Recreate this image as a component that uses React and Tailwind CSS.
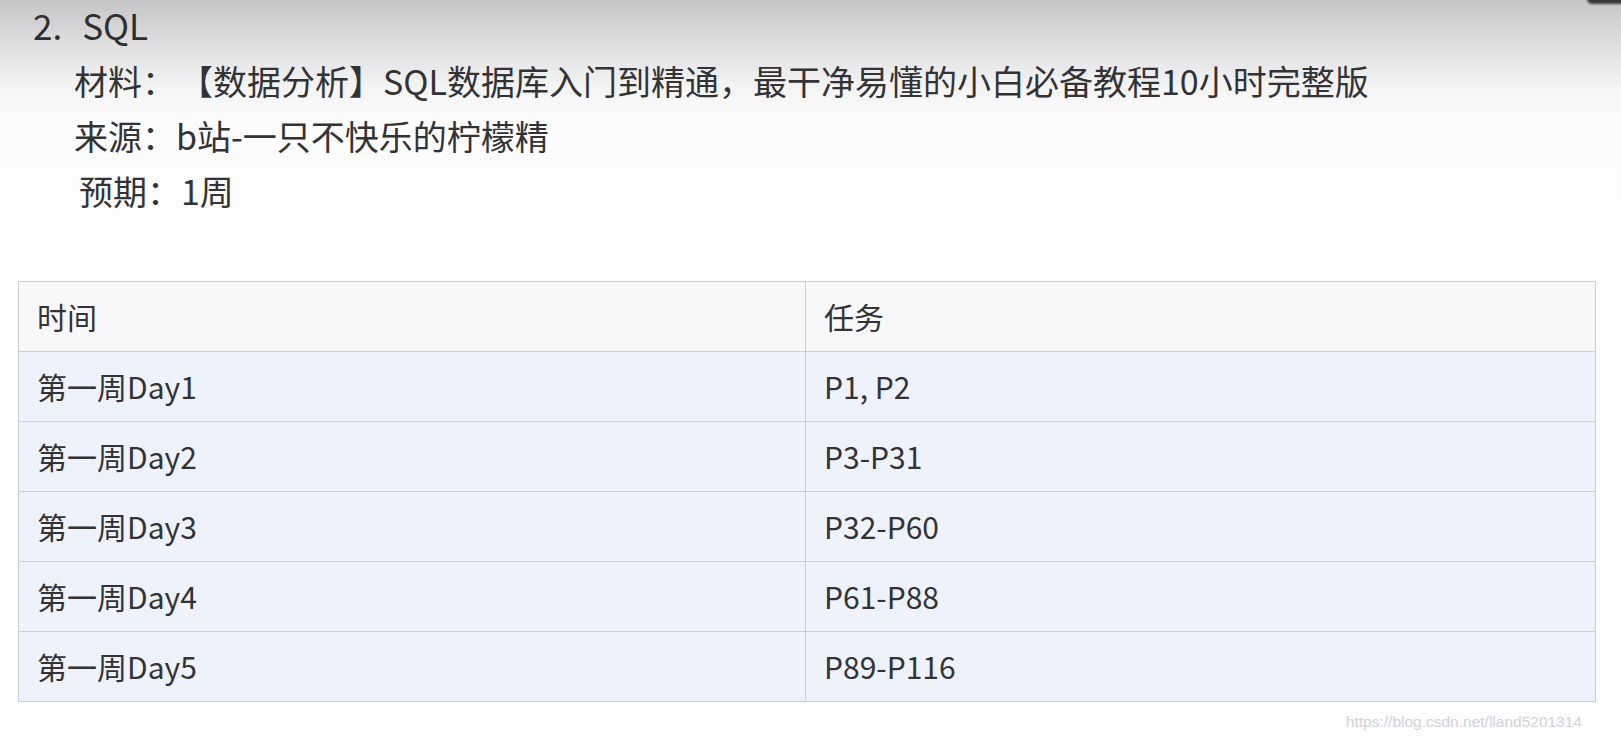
const rows = [
  { time: '第一周Day1', task: 'P1, P2' },
  { time: '第一周Day2', task: 'P3-P31' },
  { time: '第一周Day3', task: 'P32-P60' },
  { time: '第一周Day4', task: 'P61-P88' },
  { time: '第一周Day5', task: 'P89-P116' },
];

const App = () => {
  return (
    <div className="relative min-h-[740px] w-full overflow-hidden bg-[linear-gradient(to_bottom,#c6c6c8_0px,#dcdcde_40px,#f3f3f4_85px,#fcfcfd_120px,#fdfdfe_100%)] font-['Noto_Sans_CJK_SC',sans-serif] text-[#333336]">
      {/* dark blob in the corner */}
      <div className="absolute -top-[6px] right-[-6px] h-[10px] w-[40px] rounded-full bg-[#3a3a3c] blur-[1px]" />

      {/* Heading and notes */}
      <div className="pl-[33px]">
        <h2 className="flex h-[50px] items-center gap-[20px] text-[35px] text-[#2e2e30]">
          <span>2.</span>
          <span>SQL</span>
        </h2>
        <div className="mt-[3px] pl-[41px] text-[34px]">
          <p className="h-[55px] leading-[55px]">
            材料：<span className="ml-[20px]">【数据分析】SQL数据库入门到精通，最干净易懂的小白必备教程10小时完整版</span>
          </p>
          <p className="h-[55px] leading-[55px]">来源：b站-一只不快乐的柠檬精</p>
          <p className="h-[55px] pl-[5px] leading-[55px]">预期：1周</p>
        </div>
      </div>

      {/* Table */}
      <table className="ml-[18px] mt-[63px] w-[1578px] table-fixed border-collapse border border-[#c6c7cd] text-[30px]">
        <colgroup>
          <col className="w-[787px]" />
          <col />
        </colgroup>
        <thead>
          <tr className="h-[70px] bg-[#f8f8fa]">
            <th className="border border-[#cdced4] pl-[18px] text-left font-normal">时间</th>
            <th className="border border-[#cdced4] pl-[18px] text-left font-normal">任务</th>
          </tr>
        </thead>
        <tbody>
          {rows.map((r) => (
            <tr key={r.time} className="h-[70px] bg-[#eef2fc]">
              <td className="border border-[#cdced4] pl-[18px]">{r.time}</td>
              <td className="border border-[#cdced4] pl-[18px]">{r.task}</td>
            </tr>
          ))}
        </tbody>
      </table>

      {/* watermark */}
      <div className="absolute bottom-[8px] right-[39px] font-['Liberation_Sans',sans-serif] text-[15.5px] leading-[20px] text-[#d2d2d6]">
        https://blog.csdn.net/lland5201314
      </div>
    </div>
  );
};

export default App;
